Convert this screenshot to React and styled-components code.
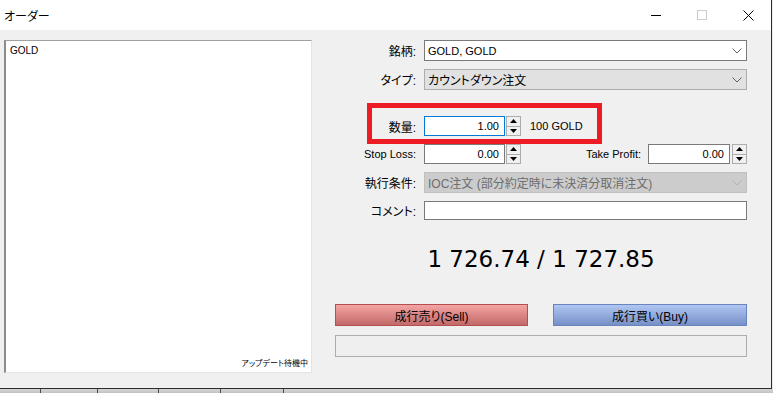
import React from "react";
import styled, { createGlobalStyle } from "styled-components";

const GlobalStyle = createGlobalStyle`
  html, body {
    margin: 0;
    padding: 0;
    background: #ececec;
  }
  body {
    font-family: "Liberation Sans", "Noto Sans CJK JP", sans-serif;
    font-feature-settings: "palt";
    color: #000;
  }
  * {
    box-sizing: border-box;
  }
`;

const Window = styled.div`
  width: 772px;
  height: 389px;
  display: flex;
  flex-direction: column;
  background: #f0f0f0;
  border-right: 1px solid #2b2b2b;
  border-bottom: 1px solid #2b2b2b;
`;

const TitleBar = styled.div`
  height: 30px;
  flex-shrink: 0;
  display: flex;
  align-items: center;
  padding-left: 4px;
  background: #fff;
`;

const Title = styled.span`
  font-size: 12px;
`;

const Controls = styled.div`
  margin-left: auto;
  display: flex;
  height: 100%;
`;

const ControlButton = styled.div`
  width: 46px;
  display: flex;
  align-items: center;
  justify-content: center;
`;

const Body = styled.div`
  flex: 1;
  display: flex;
  padding: 10px 0 0 4px;
`;

const ChartPanel = styled.div`
  width: 308px;
  height: 333px;
  display: flex;
  flex-direction: column;
  justify-content: space-between;
  padding: 4px 3px 3px 4px;
  background: #fff;
  border-left: 2px solid #8c8c8c;
  border-top: 1px solid #a0a0a0;
  border-right: 1px solid #e3e3e3;
  border-bottom: 1px solid #e3e3e3;
`;

const Symbol = styled.div`
  font-size: 10px;
  line-height: 12px;
`;

const Status = styled.div`
  font-size: 8px;
  line-height: 10px;
  text-align: right;
`;

const Form = styled.div`
  position: relative;
  width: 412px;
  margin-left: 23px;
  display: flex;
  flex-direction: column;
`;

const Row = styled.div`
  display: grid;
  grid-template-columns: 81px 1fr;
  column-gap: 8px;
  align-items: center;
  margin-top: ${(p) => p.$gap || 0}px;
`;

const Label = styled.span`
  font-size: ${(p) => (p.$latin ? 11 : 12)}px;
  text-align: right;
  white-space: nowrap;
`;

const Combo = styled.div`
  height: ${(p) => p.$h || 21}px;
  display: flex;
  align-items: center;
  padding: 0 4px 0 3px;
  font-size: ${(p) => (p.$latin ? 11 : 12)}px;
  white-space: nowrap;
  background: ${(p) =>
    p.$variant === "edit" ? "#fff" : p.$variant === "disabled" ? "#cccccc" : "#e1e1e1"};
  border: 1px solid
    ${(p) =>
      p.$variant === "edit" ? "#7a7a7a" : p.$variant === "disabled" ? "#bfbfbf" : "#adadad"};
  color: ${(p) => (p.$variant === "disabled" ? "#6d6d6d" : "#000")};

  svg {
    margin-left: auto;
  }
`;

const TextBox = styled.div`
  height: ${(p) => p.$h || 19}px;
  background: #fff;
  border: 1px solid #7a7a7a;
`;

const Controls2 = styled.div`
  display: flex;
  align-items: center;
`;

const NumberBox = styled.div`
  width: ${(p) => p.$w || 81}px;
  height: 20px;
  display: flex;
  align-items: center;
  justify-content: flex-end;
  padding-right: 5px;
  font-size: 11px;
  background: #fff;
  border: 1px solid ${(p) => (p.$focus ? "#0078d7" : "#7a7a7a")};
`;

const Spinner = styled.div`
  width: 15px;
  height: 20px;
  margin-left: ${(p) => p.$gap || 1}px;
  display: flex;
  flex-direction: column;
`;

const SpinHalf = styled.div`
  flex: 1;
  display: flex;
  align-items: center;
  justify-content: center;
  background: #f0f0f0;
  border: 1px solid #adadad;
  border-top-width: ${(p) => (p.$down ? 0 : 1)}px;
`;

const Unit = styled.span`
  margin-left: 9px;
  font-size: 11px;
`;

const ProfitGroup = styled.div`
  margin-left: auto;
  display: flex;
  align-items: center;
`;

const ProfitLabel = styled.span`
  font-size: 11px;
  margin-right: 7px;
  white-space: nowrap;
`;

const Price = styled.div`
  margin-top: 21px;
  height: 36px;
  line-height: 36px;
  text-align: center;
  font-family: "DejaVu Sans", sans-serif;
  font-size: 23px;
`;

const ButtonRow = styled.div`
  margin-top: 27px;
  display: flex;
  justify-content: space-between;
`;

const TradeButton = styled.div`
  width: ${(p) => (p.$buy ? 194 : 193)}px;
  height: 22px;
  display: flex;
  align-items: center;
  justify-content: center;
  font-size: 12px;
  background: ${(p) =>
    p.$buy
      ? "linear-gradient(#b0c6f3, #7690c7)"
      : "linear-gradient(#f4a4a4, #c26969)"};
  border: 1px solid ${(p) => (p.$buy ? "#6a84bd" : "#b54f4f")};
`;

const Progress = styled.div`
  margin-top: 9px;
  height: 22px;
  background: #efefef;
  border: 1px solid #adadad;
`;

const Highlight = styled.div`
  position: absolute;
  left: 32px;
  top: 63px;
  width: 235px;
  height: 41px;
  border: 5px solid #ed1c24;
  pointer-events: none;
`;

const Taskbar = styled.div`
  width: 773px;
  height: 4px;
  display: flex;
  background: linear-gradient(#d6d6d6, #c2c2c2);
`;

const TaskSegment = styled.div`
  width: ${(p) => p.$w}px;
  border-right: 1px solid #4a4a4a;
`;

const Chevron = ({ disabled }) => (
  <svg width="10" height="6" viewBox="0 0 10 6">
    <path d="M0.5 0.5 L5 5 L9.5 0.5" fill="none" stroke={disabled ? "#b3b3b3" : "#606060"} strokeWidth="1" />
  </svg>
);

const Spin = ({ gap }) => (
  <Spinner $gap={gap}>
    <SpinHalf>
      <svg width="7" height="4" viewBox="0 0 7 4">
        <path d="M3.5 0 L7 4 L0 4 Z" fill="#000" />
      </svg>
    </SpinHalf>
    <SpinHalf $down>
      <svg width="7" height="4" viewBox="0 0 7 4">
        <path d="M0 0 L7 0 L3.5 4 Z" fill="#000" />
      </svg>
    </SpinHalf>
  </Spinner>
);

const taskSegments = [41, 57, 61, 62, 63];

export default function App() {
  return (
    <>
      <GlobalStyle />
      <Window>
        <TitleBar>
          <Title>オーダー</Title>
          <Controls>
            <ControlButton>
              <svg width="10" height="1" viewBox="0 0 10 1">
                <rect width="10" height="1" fill="#000" />
              </svg>
            </ControlButton>
            <ControlButton>
              <svg width="10" height="10" viewBox="0 0 10 10">
                <rect x="0.5" y="0.5" width="9" height="9" fill="none" stroke="#cccccc" />
              </svg>
            </ControlButton>
            <ControlButton>
              <svg width="11" height="11" viewBox="0 0 11 11">
                <path d="M0.5 0.5 L10.5 10.5 M10.5 0.5 L0.5 10.5" stroke="#000" strokeWidth="1" />
              </svg>
            </ControlButton>
          </Controls>
        </TitleBar>

        <Body>
          <ChartPanel>
            <Symbol>GOLD</Symbol>
            <Status>アップデート待機中</Status>
          </ChartPanel>

          <Form>
            <Row>
              <Label>銘柄:</Label>
              <Combo $variant="edit" $latin>
                GOLD, GOLD
                <Chevron />
              </Combo>
            </Row>
            <Row $gap={8}>
              <Label>タイプ:</Label>
              <Combo>
                カウントダウン注文
                <Chevron />
              </Combo>
            </Row>
            <Row $gap={26}>
              <Label>数量:</Label>
              <Controls2>
                <NumberBox $focus>1.00</NumberBox>
                <Spin />
                <Unit>100 GOLD</Unit>
              </Controls2>
            </Row>
            <Row $gap={8}>
              <Label $latin>Stop Loss:</Label>
              <Controls2>
                <NumberBox>0.00</NumberBox>
                <Spin />
                <ProfitGroup>
                  <ProfitLabel>Take Profit:</ProfitLabel>
                  <NumberBox $w={82}>0.00</NumberBox>
                  <Spin gap={2} />
                </ProfitGroup>
              </Controls2>
            </Row>
            <Row $gap={8}>
              <Label>執行条件:</Label>
              <Combo $variant="disabled">
                IOC注文 (部分約定時に未決済分取消注文)
                <Chevron disabled />
              </Combo>
            </Row>
            <Row $gap={8}>
              <Label>コメント:</Label>
              <TextBox />
            </Row>

            <Price>1 726.74 / 1 727.85</Price>

            <ButtonRow>
              <TradeButton>成行売り(Sell)</TradeButton>
              <TradeButton $buy>成行買い(Buy)</TradeButton>
            </ButtonRow>
            <Progress />

            <Highlight />
          </Form>
        </Body>
      </Window>
      <Taskbar>
        {taskSegments.map((w, i) => (
          <TaskSegment key={i} $w={w} />
        ))}
      </Taskbar>
    </>
  );
}
